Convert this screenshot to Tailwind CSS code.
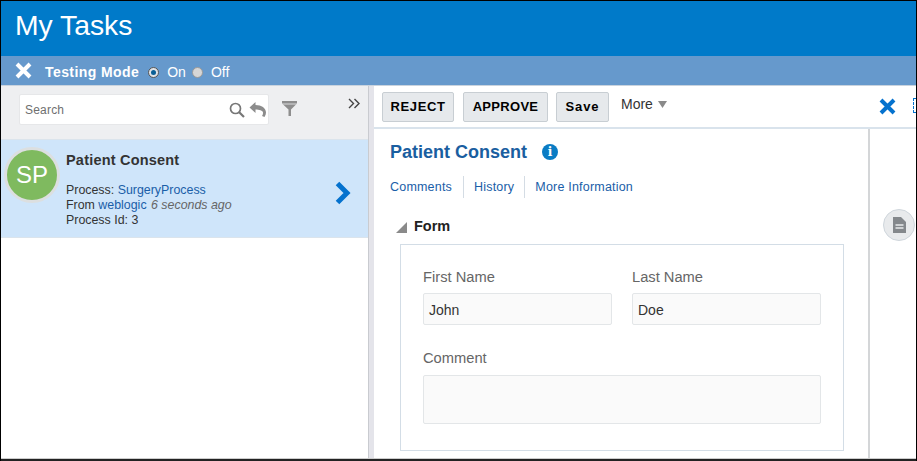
<!doctype html>
<html lang="en">
<head>
<meta charset="UTF-8">
<title>My Tasks</title>
<script src="https://cdn.jsdelivr.net/npm/@tailwindcss/browser@4"></script>
</head>
<body class="bg-white">
<div class="w-[917px] h-[461px] overflow-hidden flex flex-col font-['Liberation_Sans',Arial,sans-serif] bg-white border-t border-l border-r border-black relative">
    <!-- title -->
    <div class="h-[55px] shrink-0 bg-[#007ac9] pl-[14px] pt-[8px] text-white text-[28.3px] leading-[32px]">My Tasks</div>

    <!-- testing mode bar -->
    <div class="h-[30px] shrink-0 bg-[#6699cc] flex items-center pl-[14px] pt-[3px] text-white text-[14px] border-b border-[#c9d3de]">
        <svg class="w-[17px] h-[17px] mr-[13px] -mt-[4px]" viewBox="0 0 17 17"><path d="M2 2 L15 15 M15 2 L2 15" stroke="#fff" stroke-width="4"/></svg>
        <span class="font-bold tracking-[0.42px] mr-[9px]">Testing Mode</span>
        <span class="w-[11px] h-[11px] rounded-full bg-[#dfe3e8] border border-[#555] flex items-center justify-center mr-[8px]"><span class="w-[5px] h-[5px] rounded-full bg-[#0a5f96] block"></span></span>
        <span class="mr-[6px]">On</span>
        <span class="w-[11px] h-[11px] rounded-full bg-[#d6d6d6] border border-[#999] mr-[8px]"></span>
        <span>Off</span>
    </div>

    <div class="flex flex-1 min-h-0">
        <!-- task list -->
        <div class="w-[367px] shrink-0 flex flex-col">
            <div class="h-[53px] bg-[#eeeff1] flex items-start relative pt-[8px] pl-[18px]">
                <div class="w-[250px] h-[31px] bg-white rounded-[2px] border border-[#e6e7e9] flex items-center pl-[5px] text-[12px] text-[#6f6f6f] tracking-[0.2px]">
                    <span class="flex-1">Search</span>
                    <svg class="w-[16px] h-[16px] mr-[4px]" viewBox="0 0 16 16" fill="none"><circle cx="6.5" cy="6.5" r="5" stroke="#777" stroke-width="1.7"/><path d="M10 10 L15 15" stroke="#777" stroke-width="2.2"/></svg>
                    <svg class="w-[17px] h-[15px] mr-[2px]" viewBox="0 0 17 15"><path d="M0.5 5.5 L6.5 0 V3 C12.5 3 17 6 17 10.5 C17 12 16.5 13.5 15.5 15 L13 14 C14 12.5 14 11.5 14 10.5 C14 8.5 10 7.5 6.5 7.5 V11 Z" fill="#8c8c8c"/></svg>
                </div>
                <svg class="w-[15px] h-[15px] ml-[13px] mt-[7px]" viewBox="0 0 15 15"><path d="M0 0 H15 V2.5 L9 8.5 V15 H6.5 V8.5 L0 2.5 Z" fill="#8e8e8e"/><path d="M0 3 H15" stroke="#eeeff1" stroke-width="0.8"/></svg>
                <svg class="absolute left-[347px] top-[12px] w-[12px] h-[11px]" viewBox="0 0 12 11" fill="none"><path d="M1 1 L5.5 5.5 L1 10 M6.5 1 L11 5.5 L6.5 10" stroke="#444" stroke-width="1.4"/></svg>
            </div>
            <div class="h-[99px] bg-[#cfe5fa] border-t border-b border-[#dbe4ec] flex items-start relative">
                <div class="ml-[3px] mt-[7px] w-[56px] h-[56px] rounded-full border-[3px] border-[#dcdfe0] bg-[#7fba5f] text-white text-[24px] flex items-center justify-center shrink-0">SP</div>
                <div class="ml-[6px] text-[12.4px] leading-[15px] text-[#333]">
                    <div class="font-bold text-[14.5px] leading-[18px] mt-[11px] mb-[14px] tracking-[0.2px]">Patient Consent</div>
                    <div>Process: <span class="text-[#1a5ea8]">SurgeryProcess</span></div>
                    <div>From <span class="text-[#1a5ea8]">weblogic</span> <span class="italic text-[#666] ml-[1px]">6 seconds ago</span></div>
                    <div>Process Id: 3</div>
                </div>
                <svg class="absolute left-[333px] top-[41px] w-[17px] h-[24px]" viewBox="0 0 17 24" fill="none"><path d="M3.5 2.5 L13 12 L3.5 21.5" stroke="#0572ce" stroke-width="5"/></svg>
            </div>
            <div class="flex-1 bg-white"></div>
        </div>

        <!-- splitter -->
        <div class="w-[6px] shrink-0 bg-[#e4e4ea] border-l border-[#c9cbd0]"></div>

        <!-- detail -->
        <div class="flex-1 min-w-0 flex flex-col">
            <div class="h-[43px] shrink-0 border-b-2 border-[#d9e3ec] flex items-start pt-[6px] pl-[8px] relative">
                <button class="w-[72px] h-[30px] bg-[#e6e9ec] border border-[#c8ced3] rounded-[2px] text-[13px] font-bold text-black tracking-[0.6px]">REJECT</button>
                <button class="w-[85px] h-[30px] ml-[9px] bg-[#e6e9ec] border border-[#c8ced3] rounded-[2px] text-[13px] font-bold text-black tracking-[0.3px]">APPROVE</button>
                <button class="w-[53px] h-[30px] ml-[8px] bg-[#e6e9ec] border border-[#c8ced3] rounded-[2px] text-[13px] font-bold text-black tracking-[0.9px]">Save</button>
                <span class="ml-[12px] mt-[3px] text-[14px] leading-[18px] text-[#333]">More</span>
                <svg class="ml-[5px] mt-[9px] w-[9px] h-[7px]" viewBox="0 0 9 7"><path d="M0 0 H9 L4.5 7 Z" fill="#8a8a8a"/></svg>
                <svg class="absolute left-[505px] top-[12px] w-[17px] h-[17px]" viewBox="0 0 17 17"><path d="M2 2 L15 15 M15 2 L2 15" stroke="#0572ce" stroke-width="4"/></svg>
                <div class="absolute left-[539px] top-[12px] w-[10px] h-[15px] border border-dashed border-[#0572ce]"></div>
            </div>
            <div class="flex-1 min-h-0 flex">
                <div class="w-[496px] shrink-0 border-r-2 border-[#d4d6d8] pl-[16px]">
                    <div class="flex items-center mt-[13px] h-[20px]">
                        <span class="font-bold text-[18px] text-[#1a5ea0]">Patient Consent</span>
                        <span class="ml-[15px] w-[16px] h-[16px] rounded-full bg-[#0a7cc4] text-white text-[12px] font-bold font-['DejaVu_Serif',serif] flex items-center justify-center">i</span>
                    </div>
                    <div class="flex items-center mt-[14px] h-[22px] text-[12.5px] text-[#1a5ea8] tracking-[0.2px]">
                        <span class="pr-[11px] border-r border-[#d4dce4] leading-[22px]">Comments</span>
                        <span class="px-[10px] border-r border-[#d4dce4] leading-[22px]">History</span>
                        <span class="pl-[10px]">More Information</span>
                    </div>
                    <div class="flex items-center mt-[21px] h-[16px] ml-[6px]">
                        <svg class="w-[11px] h-[11px]" viewBox="0 0 11 11"><path d="M11 0 V11 H0 Z" fill="#8a8a8a"/></svg>
                        <span class="ml-[7px] font-bold text-[14.5px] text-[#222]">Form</span>
                    </div>
                    <div class="mt-[9px] ml-[10px] w-[444px] h-[207px] border border-[#d3dde6] px-[22px] pt-[22px]">
                        <div class="flex gap-[20px]">
                            <div class="w-[189px]">
                                <div class="text-[14.7px] leading-[20px] text-[#666]">First Name</div>
                                <div class="mt-[6px] h-[32px] bg-[#fafafa] border border-[#e3e6e8] rounded-[2px] pl-[5px] text-[14px] leading-[32px] text-[#333]">John</div>
                            </div>
                            <div class="w-[189px]">
                                <div class="text-[14.7px] leading-[20px] text-[#666]">Last Name</div>
                                <div class="mt-[6px] h-[32px] bg-[#fafafa] border border-[#e3e6e8] rounded-[2px] pl-[5px] text-[14px] leading-[32px] text-[#333]">Doe</div>
                            </div>
                        </div>
                        <div class="mt-[23px] text-[14.7px] leading-[20px] text-[#666]">Comment</div>
                        <div class="mt-[7px] h-[49px] bg-[#fafafa] border border-[#e3e6e8] rounded-[2px]"></div>
                    </div>
                </div>
                <div class="flex-1 relative">
                    <div class="absolute left-[13px] top-[80px] w-[32px] h-[32px] rounded-full bg-[#e8eaec] border border-[#cfd6dc] flex items-center justify-center">
                        <svg class="w-[13px] h-[16px]" viewBox="0 0 13 16"><path d="M0 0 H8 L13 5 V16 H0 Z" fill="#84888c"/><path d="M2.5 8 H10.5 M2.5 11 H10.5" stroke="#e8eaec" stroke-width="1.3"/></svg>
                    </div>
                </div>
            </div>
        </div>
    </div>
    <div class="h-[3px] shrink-0 border-t border-[#cccccc] bg-[#222]"></div>
</div>
</body>
</html>
